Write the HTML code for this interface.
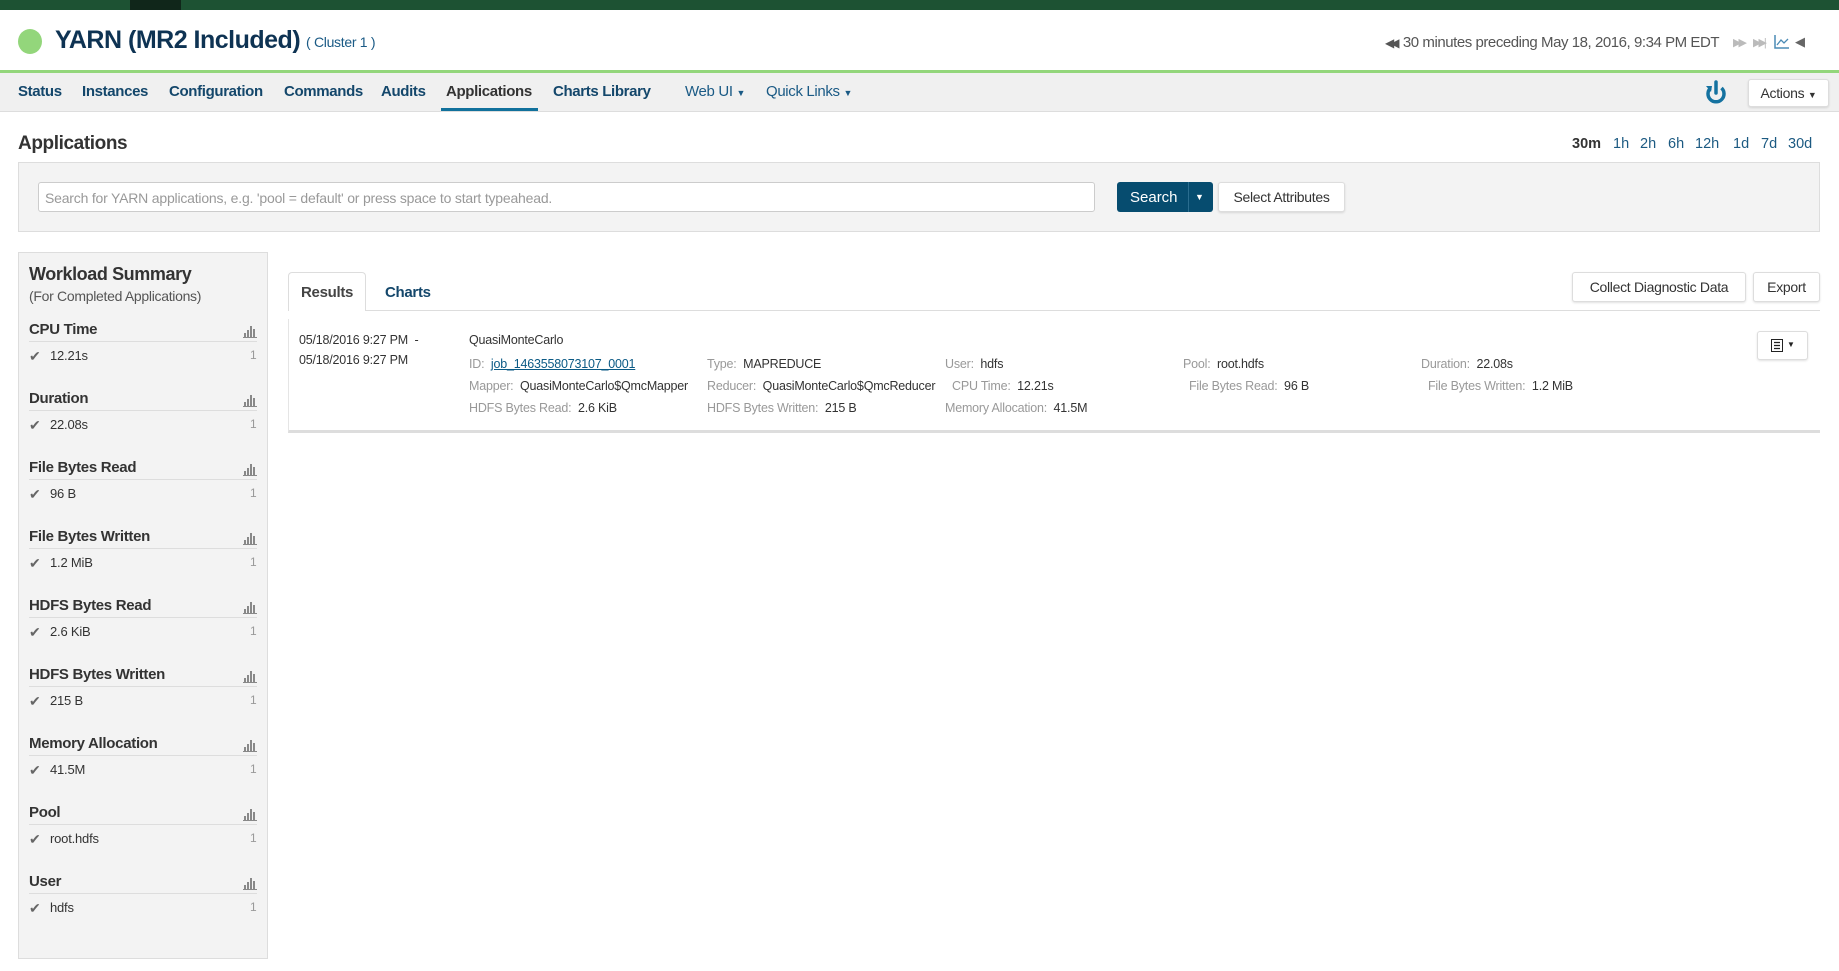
<!DOCTYPE html>
<html><head><meta charset="utf-8"><style>
*{box-sizing:border-box;margin:0;padding:0}
body{width:1839px;height:971px;overflow:hidden;background:#fff;font-family:"Liberation Sans",sans-serif;color:#333;position:relative}
.a{position:absolute;white-space:nowrap}
.nav{font-size:15px;font-weight:bold;color:#14476b;top:83px;letter-spacing:-0.35px}
.sb-t{font-size:15px;font-weight:bold;color:#333;letter-spacing:-0.3px}
.sb-v{font-size:13px;color:#333}
.lbl{color:#999}
.r{font-size:12.5px;color:#333;letter-spacing:-0.2px}
.btn{position:absolute;background:#fff;border:1px solid #ddd;border-radius:3px;box-shadow:0 1px 2px rgba(0,0,0,.12);font-size:15px;color:#333;text-align:center;letter-spacing:-0.3px}
.tr{font-size:14.5px;color:#1c5a82;top:136px}
</style></head><body>
<div class="a" style="left:0;top:0;width:1839px;height:10px;background:#1d5233"></div>
<div class="a" style="left:130px;top:0;width:51px;height:10px;background:#10261a"></div>
<div class="a" style="left:18px;top:29px;width:24px;height:25px;border-radius:50%;background:#93d67b"></div>
<div class="a" style="left:55px;top:26px;font-size:25px;font-weight:bold;color:#0e3353;letter-spacing:-0.5px">YARN (MR2 Included)</div>
<div class="a" style="left:306px;top:34px;font-size:14px;color:#1a5a85;letter-spacing:-0.3px">( Cluster 1 )</div>
<div class="a" style="left:1385px;top:34px;font-size:15px;color:#555;letter-spacing:-0.45px"><span style="font-size:12px;letter-spacing:-4px">◀◀</span>&nbsp; 30 minutes preceding May 18, 2016, 9:34 PM EDT</div>
<div class="a" style="left:1733px;top:36px;font-size:11px;color:#bbb;letter-spacing:-3px">▶▶</div>
<div class="a" style="left:1753px;top:36px;font-size:11px;color:#bbb;letter-spacing:-3px">▶▶|</div>
<svg class="a" style="left:1774px;top:34px" width="16" height="16"><path d="M1 1V14H15" stroke="#4b8bb5" fill="none" stroke-width="1.5"/><path d="M3 11L7 6L10 9L14 5" stroke="#4b8bb5" fill="none" stroke-width="1.3"/></svg>
<div class="a" style="left:1795px;top:34px;font-size:13px;color:#666">◀</div>
<div class="a" style="left:0;top:70px;width:1839px;height:3px;background:#93d67b"></div>
<div class="a" style="left:0;top:73px;width:1839px;height:39px;background:#f0f0f0;border-bottom:1px solid #ddd"></div>
<div class="a nav" style="left:18px">Status</div>
<div class="a nav" style="left:82px">Instances</div>
<div class="a nav" style="left:169px">Configuration</div>
<div class="a nav" style="left:284px">Commands</div>
<div class="a nav" style="left:381px">Audits</div>
<div class="a nav" style="left:446px;color:#333">Applications</div>
<div class="a" style="left:441px;top:108px;width:97px;height:3px;background:#11719c"></div>
<div class="a nav" style="left:553px">Charts Library</div>
<div class="a nav" style="left:685px;font-weight:normal;color:#1a5a85">Web UI <span style="font-size:9px">▼</span></div>
<div class="a nav" style="left:766px;font-weight:normal;color:#1a5a85">Quick Links <span style="font-size:9px">▼</span></div>
<svg class="a" style="left:1703px;top:79px" width="26" height="26"><path d="M13 3V14" stroke="#1572a0" stroke-width="3.5" stroke-linecap="round"/><path d="M7.5 9A8 8 0 1 0 18.5 9" stroke="#1572a0" stroke-width="3.5" fill="none"/><path d="M3 7L9 7L8 13Z" fill="#1572a0"/></svg>
<div class="btn" style="left:1748px;top:79px;width:81px;height:28px;line-height:26px;font-size:14px">Actions <span style="font-size:9px">▼</span></div>
<div class="a" style="left:18px;top:133px;font-size:19px;font-weight:bold;color:#333;letter-spacing:-0.4px">Applications</div>
<div class="a tr" style="left:1572px;font-weight:bold;color:#333">30m</div>
<div class="a tr" style="left:1613px">1h</div>
<div class="a tr" style="left:1640px">2h</div>
<div class="a tr" style="left:1668px">6h</div>
<div class="a tr" style="left:1695px">12h</div>
<div class="a tr" style="left:1733px">1d</div>
<div class="a tr" style="left:1761px">7d</div>
<div class="a tr" style="left:1788px">30d</div>
<div class="a" style="left:18px;top:162px;width:1802px;height:70px;background:#f3f3f3;border:1px solid #ddd"></div>
<div class="a" style="left:38px;top:182px;width:1057px;height:30px;background:#fff;border:1px solid #ccc;border-radius:3px;font-size:14px;color:#999;padding:7px 6px;letter-spacing:-0.2px">Search for YARN applications, e.g. 'pool = default' or press space to start typeahead.</div>
<div class="a" style="left:1117px;top:182px;width:96px;height:30px;background:#064c6f;border-radius:3px"></div>
<div class="a" style="left:1130px;top:189px;font-size:15px;color:#fff">Search</div>
<div class="a" style="left:1188px;top:182px;width:1px;height:30px;background:#2a6d8f"></div>
<div class="a" style="left:1195px;top:192px;font-size:9px;color:#fff">▼</div>
<div class="btn" style="left:1218px;top:182px;width:127px;height:30px;line-height:29px;font-size:14px">Select Attributes</div>
<div class="a" style="left:18px;top:252px;width:250px;height:707px;background:#f3f3f3;border:1px solid #ddd"></div>
<div class="a" style="left:29px;top:264px;font-size:18px;font-weight:bold;color:#333;letter-spacing:-0.4px">Workload Summary</div>
<div class="a" style="left:29px;top:288px;font-size:14px;color:#555;letter-spacing:-0.3px">(For Completed Applications)</div>
<div id="sb"></div>
<div class="a" style="left:288px;top:310px;width:1532px;height:1px;background:#ddd"></div>
<div class="a" style="left:288px;top:272px;width:78px;height:39px;background:#fff;border:1px solid #ddd;border-bottom:none;border-radius:4px 4px 0 0"></div>
<div class="a" style="left:301px;top:284px;font-size:15px;font-weight:bold;color:#444;letter-spacing:-0.3px">Results</div>
<div class="a" style="left:385px;top:284px;font-size:15px;font-weight:bold;color:#14476b;letter-spacing:-0.3px">Charts</div>
<div class="btn" style="left:1572px;top:272px;width:174px;height:30px;line-height:29px;font-size:14px">Collect Diagnostic Data</div>
<div class="btn" style="left:1753px;top:272px;width:67px;height:30px;line-height:29px;font-size:14px">Export</div>
<div class="a" style="left:288px;top:319px;width:1532px;height:114px;background:#fff;border-left:1px solid #e5e5e5;border-bottom:3px solid #ddd"></div>
<div class="a r" style="left:299px;top:333px">05/18/2016 9:27 PM &nbsp;-</div>
<div class="a r" style="left:299px;top:353px">05/18/2016 9:27 PM</div>
<div class="a r" style="left:469px;top:333px">QuasiMonteCarlo</div>
<div class="a r" style="left:469px;top:357px"><span class="lbl">ID:</span>&nbsp; <span style="color:#0b5a85;text-decoration:underline">job_1463558073107_0001</span></div>
<div class="a r" style="left:707px;top:357px"><span class="lbl">Type:</span>&nbsp; MAPREDUCE</div>
<div class="a r" style="left:945px;top:357px"><span class="lbl">User:</span>&nbsp; hdfs</div>
<div class="a r" style="left:1183px;top:357px"><span class="lbl">Pool:</span>&nbsp; root.hdfs</div>
<div class="a r" style="left:1421px;top:357px"><span class="lbl">Duration:</span>&nbsp; 22.08s</div>
<div class="a r" style="left:469px;top:379px"><span class="lbl">Mapper:</span>&nbsp; QuasiMonteCarlo$QmcMapper</div>
<div class="a r" style="left:707px;top:379px"><span class="lbl">Reducer:</span>&nbsp; QuasiMonteCarlo$QmcReducer</div>
<div class="a r" style="left:952px;top:379px"><span class="lbl">CPU Time:</span>&nbsp; 12.21s</div>
<div class="a r" style="left:1189px;top:379px"><span class="lbl">File Bytes Read:</span>&nbsp; 96 B</div>
<div class="a r" style="left:1428px;top:379px"><span class="lbl">File Bytes Written:</span>&nbsp; 1.2 MiB</div>
<div class="a r" style="left:469px;top:401px"><span class="lbl">HDFS Bytes Read:</span>&nbsp; 2.6 KiB</div>
<div class="a r" style="left:707px;top:401px"><span class="lbl">HDFS Bytes Written:</span>&nbsp; 215 B</div>
<div class="a r" style="left:945px;top:401px"><span class="lbl">Memory Allocation:</span>&nbsp; 41.5M</div>
<div class="btn" style="left:1757px;top:331px;width:51px;height:29px"></div>
<svg class="a" style="left:1771px;top:339px" width="12" height="13"><rect x="0.5" y="0.5" width="11" height="12" fill="#fff" stroke="#222"/><path d="M3 3.5H9M3 6.5H9M3 9.5H9" stroke="#222" stroke-width="1.3"/></svg>
<div class="a" style="left:1787px;top:340px;font-size:8px;color:#222">▼</div>
<script>
var items=[["CPU Time","12.21s"],["Duration","22.08s"],["File Bytes Read","96 B"],["File Bytes Written","1.2 MiB"],["HDFS Bytes Read","2.6 KiB"],["HDFS Bytes Written","215 B"],["Memory Allocation","41.5M"],["Pool","root.hdfs"],["User","hdfs"]];
var h="";
items.forEach(function(it,i){var y=321+i*69;
h+='<div class="a sb-t" style="left:29px;top:'+y+'px">'+it[0]+'</div>';
h+='<svg class="a" style="left:242px;top:'+(y+4)+'px" width="15" height="13"><path d="M1 12.5H15" stroke="#888"/><rect x="2" y="8" width="2" height="4" fill="#888"/><rect x="5" y="5" width="2" height="7" fill="#888"/><rect x="8" y="1" width="2" height="11" fill="#888"/><rect x="11" y="4" width="2" height="8" fill="#888"/></svg>';
h+='<div class="a" style="left:29px;top:'+(y+20)+'px;width:228px;height:1px;background:#ddd"></div>';
h+='<div class="a" style="left:29px;top:'+(y+27)+'px;font-size:14px;color:#666">✔</div>';
h+='<div class="a sb-v" style="left:50px;top:'+(y+27)+'px;letter-spacing:-0.2px">'+it[1]+'</div>';
h+='<div class="a" style="left:250px;top:'+(y+27)+'px;font-size:12px;color:#999">1</div>';
});
document.getElementById("sb").innerHTML=h;
</script>
</body></html>
